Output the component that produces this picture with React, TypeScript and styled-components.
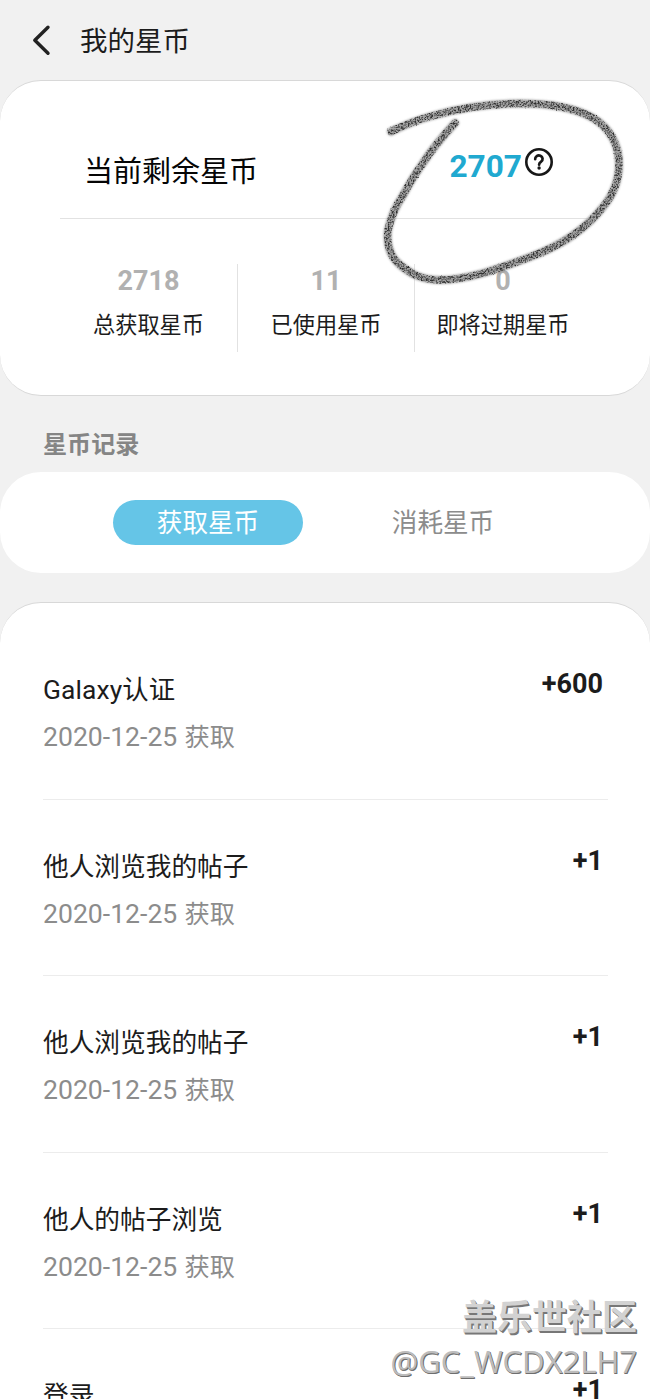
import React from "react";
import styled, { createGlobalStyle } from "styled-components";

const GlobalStyle = createGlobalStyle`
  * { box-sizing: border-box; }
  body {
    margin: 0;
    background: #f1f1f1;
    font-family: Roboto, "Noto Sans CJK SC", sans-serif;
  }
`;

const Page = styled.main`
  position: relative;
  width: 650px;
  height: 1399px;
  overflow: hidden;
  background: #f1f1f1;
  color: #1c1c1c;
`;

const Header = styled.header`
  display: flex;
  align-items: center;
  height: 80px;
  padding-left: 30px;
`;

const Title = styled.h1`
  margin: 3px 0 0 26px;
  font-size: 27.5px;
  font-weight: 400;
  line-height: 40px;
`;

const SummaryCard = styled.section`
  height: 316px;
  padding: 0 60px;
  border: 1px solid #d8d8d8;
  border-width: 1px 0;
  border-radius: 41px;
  background: #fff;
`;

const Balance = styled.div`
  display: flex;
  justify-content: space-between;
  height: 138px;
  padding: 0 36px 0 24px;
  border-bottom: 1px solid #e2e2e2;
`;

const BalanceLabel = styled.span`
  margin-top: 70px;
  font-size: 29px;
  line-height: 42px;
  color: #050505;
`;

const BalanceValue = styled.div`
  display: flex;
  align-items: flex-start;
  gap: 2px;
  margin-top: 65px;
  color: #20a9d0;
  font-size: 31.6px;
  font-weight: 700;
  line-height: 42px;
`;

const Stats = styled.div`
  display: grid;
  grid-template-columns: repeat(3, 177px);
  margin-top: 45px;
`;

const Stat = styled.div`
  height: 88px;
  text-align: center;
  & + & { border-left: 1px solid #e2e2e2; }
`;

const StatValue = styled.div`
  padding-top: 1px;
  font-size: 27px;
  font-weight: 700;
  line-height: 33px;
  color: #b1b1b1;
`;

const StatLabel = styled.div`
  margin-top: 10px;
  font-size: 22.2px;
  line-height: 34px;
  white-space: nowrap;
`;

const SectionTitle = styled.h2`
  margin: 0;
  height: 76px;
  padding: 29px 0 0 43px;
  font-size: 24.1px;
  font-weight: 700;
  line-height: 40px;
  color: #858585;
`;

const Tabs = styled.nav`
  display: flex;
  align-items: center;
  gap: 45px;
  height: 101px;
  padding-left: 113px;
  border-radius: 41px;
  background: #fff;
`;

const Tab = styled.button<{ $active?: boolean }>`
  width: 190px;
  height: 45px;
  padding: 2px 0 0;
  border: 0;
  border-radius: 23px;
  background: ${(p) => (p.$active ? "#65c5e7" : "transparent")};
  color: ${(p) => (p.$active ? "#fff" : "#8c8c8c")};
  font: 400 25.6px/43px Roboto, "Noto Sans CJK SC", sans-serif;
`;

const RecordCard = styled.section`
  height: 840px;
  margin-top: 29px;
  padding: 20px 42px 0 43px;
  border-top: 1px solid #d8d8d8;
  border-radius: 41px 41px 0 0;
  background: #fff;
`;

const Record = styled.article`
  display: flex;
  justify-content: space-between;
  height: 176.6px;
  border-bottom: 1px solid #ececec;
`;

const RecordTitle = styled.div<{ $latin?: boolean }>`
  margin-top: 47px;
  font-size: ${(p) => (p.$latin ? 26.4 : 25.7)}px;
  letter-spacing: ${(p) => (p.$latin ? 0.1 : 0)}px;
  line-height: 40px;
`;

const RecordDate = styled.div`
  margin-top: 7px;
  font-size: 25.2px;
  line-height: 40px;
  color: #8c8c8c;
`;

const DateDigits = styled.span`
  margin-right: 1px;
  font-size: 26.6px;
`;

const Amount = styled.span`
  margin: 41px 5px 0 0;
  font-size: 27px;
  font-weight: 700;
  line-height: 40px;
`;

const PencilRing = styled.svg`
  position: absolute;
  left: 370px;
  top: 80px;
`;

const Watermark = styled.div`
  position: absolute;
  right: 13px;
  top: 1292px;
  text-align: right;
  white-space: nowrap;
`;

const Community = styled.div`
  color: #d2d2d2;
  text-shadow: 1px 1px 0 #777, 1.5px 1.5px 0 #777;
  font: 700 35px/46px "Noto Sans CJK SC", sans-serif;
`;

const Author = styled.div`
  color: #bcbcbc;
  text-shadow: 1px 1px 0 #6e6e6e, 0.5px 0.5px 0 #777;
  font: 400 31px/46px "Open Sans", sans-serif;
`;

const stats = [
  { value: "2718", label: "总获取星币" },
  { value: "11", label: "已使用星币" },
  { value: "0", label: "即将过期星币" },
];

const records = [
  { title: "Galaxy认证", amount: "+600", latin: true },
  { title: "他人浏览我的帖子", amount: "+1" },
  { title: "他人浏览我的帖子", amount: "+1" },
  { title: "他人的帖子浏览", amount: "+1" },
  { title: "登录", amount: "+1" },
];

const ringPath =
  "M21 51.5C35 45 47 40 60 36.5C89 28 119 23.500 150 23.500C176 23.500 204 27 223 38C240 48 249 65 249 84C249 100 243 115 233 127C216 149 190 166 160 177C128 189 98 200 70 200C59 200 51 198 43 194C35 189 27 184 23 177C18 169 17 159 18 150C21 137 25 127 32 117C38 106 45 94 53 83C62 69 73 56 85 43";

export default function App() {
  return (
    <>
      <GlobalStyle />
      <Page>
        <Header>
          <svg width="24" height="32" viewBox="0 0 24 32" fill="none" stroke="#222" strokeWidth="3.4" strokeLinecap="round" strokeLinejoin="round">
            <path d="M18 3.3 4.8 16.3 18 29.3" />
          </svg>
          <Title>我的星币</Title>
        </Header>
        <SummaryCard>
          <Balance>
            <BalanceLabel>当前剩余星币</BalanceLabel>
            <BalanceValue>
              2707
              <svg width="30" height="30" viewBox="0 0 30 30" fill="none" stroke="#171717" strokeLinecap="round">
                <circle cx="15" cy="16" r="12.7" strokeWidth="2.6" />
                <path d="M11.2 13.2a3.7 3.5 0 1 1 5.9 2.5c-1.3.9-2 1.3-2 3" strokeWidth="2.7" />
                <circle cx="15.1" cy="22" r="1.7" fill="#171717" stroke="none" />
              </svg>
            </BalanceValue>
          </Balance>
          <Stats>
            {stats.map((s) => (
              <Stat key={s.label}>
                <StatValue>{s.value}</StatValue>
                <StatLabel>{s.label}</StatLabel>
              </Stat>
            ))}
          </Stats>
        </SummaryCard>
        <SectionTitle>星币记录</SectionTitle>
        <Tabs>
          <Tab $active>获取星币</Tab>
          <Tab>消耗星币</Tab>
        </Tabs>
        <RecordCard>
          {records.map((r, i) => (
            <Record key={i}>
              <div>
                <RecordTitle $latin={r.latin}>{r.title}</RecordTitle>
                <RecordDate>
                  <DateDigits>2020-12-25</DateDigits> 获取
                </RecordDate>
              </div>
              <Amount>{r.amount}</Amount>
            </Record>
          ))}
        </RecordCard>
        <PencilRing width="280" height="220" viewBox="0 0 280 220" fill="none">
          <defs>
            <filter id="grain" x="0" y="0" width="280" height="220" filterUnits="userSpaceOnUse" colorInterpolationFilters="sRGB">
              <feTurbulence type="fractalNoise" baseFrequency="0.6" numOctaves="2" seed="4" result="noise" />
              <feColorMatrix in="noise" type="matrix" values="0 0 0 0 0.18  0 0 0 0 0.18  0 0 0 0 0.18  3.4 0 0 0 -1.4" result="specks" />
              <feComposite in="specks" in2="SourceGraphic" operator="in" result="pencil" />
              <feDisplacementMap in="pencil" in2="noise" scale="2" xChannelSelector="R" yChannelSelector="G" />
            </filter>
            <filter id="soft" x="0" y="0" width="280" height="220" filterUnits="userSpaceOnUse">
              <feGaussianBlur stdDeviation="0.8" />
            </filter>
          </defs>
          <g strokeLinecap="round" strokeLinejoin="round">
            <path filter="url(#soft)" stroke="#777" strokeOpacity=".7" strokeWidth="8" d={ringPath} />
            <path filter="url(#grain)" stroke="#222" strokeWidth="7.5" d={ringPath} />
          </g>
        </PencilRing>
        <Watermark>
          <Community>盖乐世社区</Community>
          <Author>@GC_WCDX2LH7</Author>
        </Watermark>
      </Page>
    </>
  );
}
